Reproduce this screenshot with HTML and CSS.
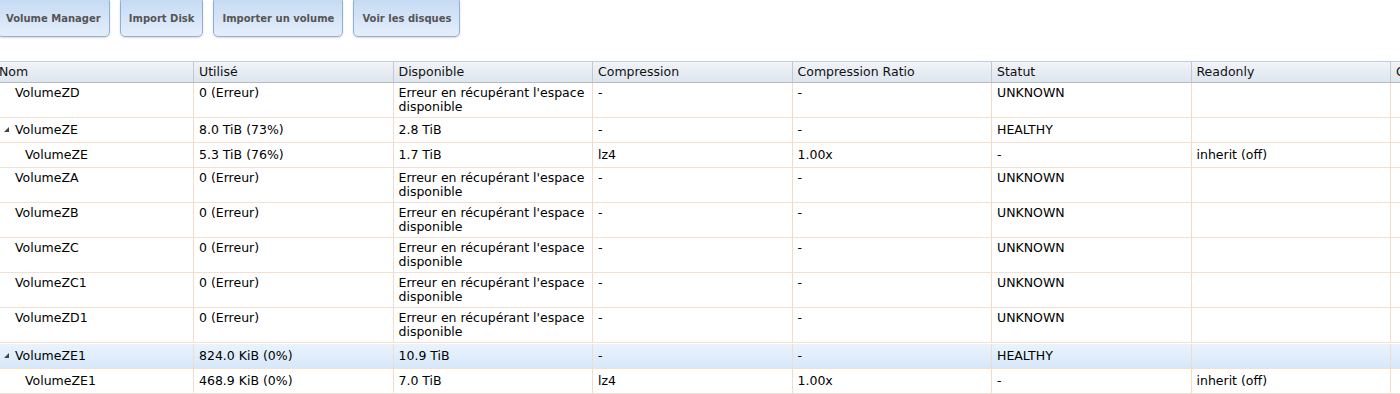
FILE: index.html
```html
<!DOCTYPE html>
<html lang="fr">
<head>
    <meta charset="UTF-8">
    <title>Volumes</title>
    <link rel="stylesheet" href="styles.css">
</head>
<body>
    <div class="toolbar">
        <button class="tb-btn">Volume Manager</button>
        <button class="tb-btn">Import Disk</button>
        <button class="tb-btn">Importer un volume</button>
        <button class="tb-btn">Voir les disques</button>
    </div>

    <div class="grid">
        <div class="row head">
            <div class="cell">Nom</div>
            <div class="cell">Utilisé</div>
            <div class="cell">Disponible</div>
            <div class="cell">Compression</div>
            <div class="cell">Compression Ratio</div>
            <div class="cell">Statut</div>
            <div class="cell">Readonly</div>
            <div class="cell">Commentaires</div>
        </div>

        <div class="row tall">
            <div class="cell name lvl1">VolumeZD</div>
            <div class="cell">0 (Erreur)</div>
            <div class="cell">Erreur en récupérant l'espace disponible</div>
            <div class="cell">-</div>
            <div class="cell">-</div>
            <div class="cell">UNKNOWN</div>
            <div class="cell"></div>
            <div class="cell"></div>
        </div>
        <div class="row">
            <div class="cell name lvl1"><span class="arrow"></span>VolumeZE</div>
            <div class="cell">8.0 TiB (73%)</div>
            <div class="cell">2.8 TiB</div>
            <div class="cell">-</div>
            <div class="cell">-</div>
            <div class="cell">HEALTHY</div>
            <div class="cell"></div>
            <div class="cell"></div>
        </div>
        <div class="row">
            <div class="cell name lvl2">VolumeZE</div>
            <div class="cell">5.3 TiB (76%)</div>
            <div class="cell">1.7 TiB</div>
            <div class="cell">lz4</div>
            <div class="cell">1.00x</div>
            <div class="cell">-</div>
            <div class="cell">inherit (off)</div>
            <div class="cell"></div>
        </div>
        <div class="row tall">
            <div class="cell name lvl1">VolumeZA</div>
            <div class="cell">0 (Erreur)</div>
            <div class="cell">Erreur en récupérant l'espace disponible</div>
            <div class="cell">-</div>
            <div class="cell">-</div>
            <div class="cell">UNKNOWN</div>
            <div class="cell"></div>
            <div class="cell"></div>
        </div>
        <div class="row tall">
            <div class="cell name lvl1">VolumeZB</div>
            <div class="cell">0 (Erreur)</div>
            <div class="cell">Erreur en récupérant l'espace disponible</div>
            <div class="cell">-</div>
            <div class="cell">-</div>
            <div class="cell">UNKNOWN</div>
            <div class="cell"></div>
            <div class="cell"></div>
        </div>
        <div class="row tall">
            <div class="cell name lvl1">VolumeZC</div>
            <div class="cell">0 (Erreur)</div>
            <div class="cell">Erreur en récupérant l'espace disponible</div>
            <div class="cell">-</div>
            <div class="cell">-</div>
            <div class="cell">UNKNOWN</div>
            <div class="cell"></div>
            <div class="cell"></div>
        </div>
        <div class="row tall">
            <div class="cell name lvl1">VolumeZC1</div>
            <div class="cell">0 (Erreur)</div>
            <div class="cell">Erreur en récupérant l'espace disponible</div>
            <div class="cell">-</div>
            <div class="cell">-</div>
            <div class="cell">UNKNOWN</div>
            <div class="cell"></div>
            <div class="cell"></div>
        </div>
        <div class="row tall">
            <div class="cell name lvl1">VolumeZD1</div>
            <div class="cell">0 (Erreur)</div>
            <div class="cell">Erreur en récupérant l'espace disponible</div>
            <div class="cell">-</div>
            <div class="cell">-</div>
            <div class="cell">UNKNOWN</div>
            <div class="cell"></div>
            <div class="cell"></div>
        </div>
        <div class="row selected">
            <div class="cell name lvl1"><span class="arrow"></span>VolumeZE1</div>
            <div class="cell">824.0 KiB (0%)</div>
            <div class="cell">10.9 TiB</div>
            <div class="cell">-</div>
            <div class="cell">-</div>
            <div class="cell">HEALTHY</div>
            <div class="cell"></div>
            <div class="cell"></div>
        </div>
        <div class="row">
            <div class="cell name lvl2">VolumeZE1</div>
            <div class="cell">468.9 KiB (0%)</div>
            <div class="cell">7.0 TiB</div>
            <div class="cell">lz4</div>
            <div class="cell">1.00x</div>
            <div class="cell">-</div>
            <div class="cell">inherit (off)</div>
            <div class="cell"></div>
        </div>
    </div>
</body>
</html>
```

FILE: styles.css
```css
body {
    margin: 0;
    padding: 0;
    background-color: #fff;
    font-family: "DejaVu Sans", Verdana, sans-serif;
    font-size: 12.5px;
    color: #000;
    overflow: hidden;
}

/* Toolbar buttons */
.toolbar {
    display: flex;
    gap: 10px;
    margin-left: -3px;
    margin-top: -3px;
    height: 40px;
}
.tb-btn {
    height: 40px;
    padding: 3px 8px 0 8px;
    border: 1px solid #8fb0d3;
    border-radius: 5px;
    background: linear-gradient(to bottom, #c4daf3, #e4eefa);
    box-shadow: 0 1px 2px rgba(0, 0, 0, 0.15);
    font-family: "DejaVu Sans", Verdana, sans-serif;
    font-size: 10px;
    font-weight: bold;
    color: #555;
}

/* Grid */
.grid {
    margin-top: 24px;
    margin-left: -6px;
    width: 1610px;
}
.row {
    display: grid;
    grid-template-columns: 200px repeat(7, 199.5px);
    border-bottom: 1px solid #f3e0d0;
}
.cell {
    padding: 5px;
    line-height: 14px;
    border-right: 1px solid #f1dccb;
    overflow: hidden;
}
.row.tall .cell {
    padding-top: 3px;
    padding-bottom: 3px;
}
.row.head {
    border-top: 1px solid #c9cfd6;
    border-bottom: 1px solid #b5bcc5;
    background: linear-gradient(to bottom, #f1f4f8, #dde5ee);
}
.row.head .cell {
    padding: 3px 5px 3px 5px;
    border-right: 1px solid #c2c9d2;
    color: #111;
    white-space: nowrap;
}
.row.selected {
    margin-top: 1px;
    background: linear-gradient(to bottom, #eaf3fd, #d7e8fa);
}

/* Tree name column */
.name {
    white-space: nowrap;
}
.lvl1 {
    padding-left: 21px;
    position: relative;
}
.lvl2 {
    padding-left: 31px;
}
.arrow {
    position: absolute;
    left: 10px;
    top: 9px;
    width: 0;
    height: 0;
    border-left: 5px solid transparent;
    border-bottom: 5px solid #444;
}
```
